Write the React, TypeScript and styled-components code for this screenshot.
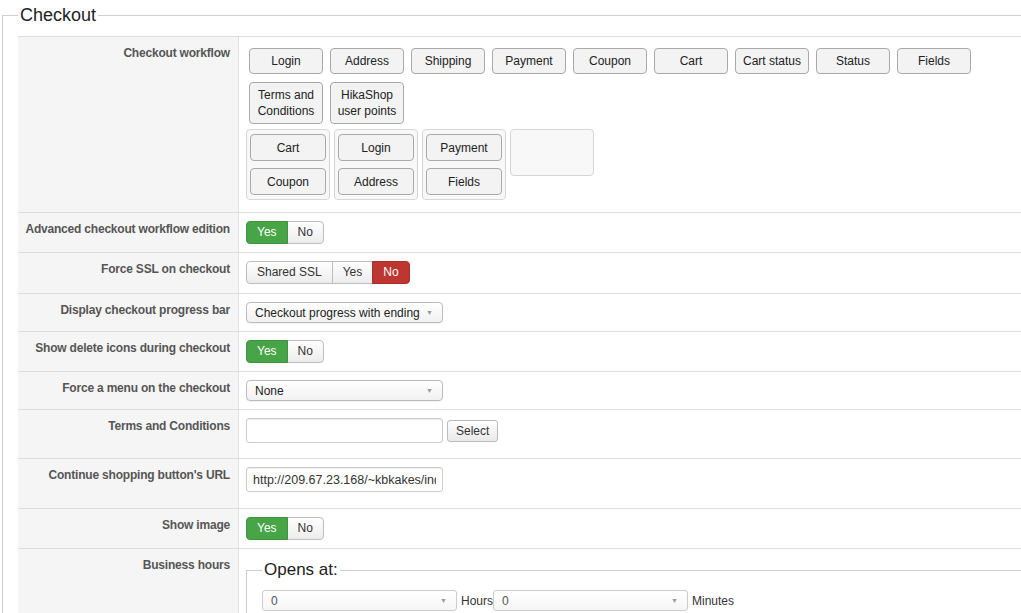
import React from "react";
import styled, { createGlobalStyle, css } from "styled-components";

const GlobalStyle = createGlobalStyle`
  html, body {
    margin: 0;
    padding: 0;
    background: #ffffff;
    overflow: hidden;
  }
  body {
    font-family: "Liberation Sans", Arial, Helvetica, sans-serif;
    color: #333;
  }
  * { box-sizing: border-box; }
`;

const Page = styled.div`
  width: 1021px;
  height: 613px;
  overflow: hidden;
`;

const Fieldset = styled.fieldset`
  margin: 3px -60px 0 2px;
  border: 1px solid #cfcfcf;
  border-right: none;
  padding: 0 0 0 15px;
  min-inline-size: 0;
`;

const Legend = styled.legend`
  font-size: 18px;
  line-height: 24px;
  padding: 0 2px;
  color: #222;
`;

const Table = styled.div`
  margin-top: 9px;
  border-top: 1px solid #dddddd;
`;

const Row = styled.div`
  display: grid;
  grid-template-columns: 221px 1fr;
  border-bottom: 1px solid #dddddd;
`;

const Label = styled.div`
  background: #f5f5f5;
  border-right: 1px solid #e0e0e0;
  padding: 8px 8px 8px 0;
  text-align: right;
  white-space: nowrap;
  font-size: 12px;
  letter-spacing: -0.2px;
  line-height: 16px;
  font-weight: bold;
  color: #555;
`;

const Value = styled.div<{ $inline?: boolean; $tall?: boolean }>`
  padding: ${(p) => (p.$tall ? "8px 7px 9px" : "8px 7px")};
  ${(p) =>
    p.$inline &&
    css`
      display: flex;
      align-items: flex-start;
    `}
`;

const SlotList = styled.div`
  display: flex;
  flex-wrap: wrap;
  gap: 8px 7px;
  margin: 3px 0 0 3px;
  max-width: 760px;
  align-items: flex-start;
`;

const SlotButton = styled.div<{ $inner?: boolean }>`
  width: ${(p) => (p.$inner ? "76px" : "74px")};
  padding: ${(p) => (p.$inner ? "5px 2px 4px" : "4px 2px")};
  line-height: 16px;
  font-size: 12px;
  text-align: center;
  color: #222;
  background: #f3f3f3;
  border: 1px solid #a9a9a9;
  border-radius: 4px;
`;

const GroupRow = styled.div`
  display: flex;
  align-items: flex-start;
  gap: 4px;
  margin: 5px 0 4px;
`;

const Group = styled.div`
  width: 84px;
  min-height: 47px;
  padding: 4px 3px;
  display: flex;
  flex-direction: column;
  gap: 7px;
  border: 1px solid #d6d6d6;
  border-radius: 4px;
  background: #f8f8f8;
`;

type Tone = "success" | "danger" | undefined;

const ToggleGroup = styled.div`
  display: inline-flex;
`;

const ToggleBtn = styled.div<{ $tone?: Tone }>`
  padding: 3px 10px;
  font-size: 12px;
  line-height: 15px;
  color: #333;
  background: linear-gradient(#ffffff, #ececec);
  border: 1px solid #bdbdbd;
  margin-left: -1px;
  &:first-child {
    margin-left: 0;
    border-radius: 4px 0 0 4px;
  }
  &:last-child {
    border-radius: 0 4px 4px 0;
  }
  ${(p) =>
    p.$tone === "success" &&
    css`
      color: #fff;
      background: #47a447;
      border-color: #3f923f;
      position: relative;
    `}
  ${(p) =>
    p.$tone === "danger" &&
    css`
      color: #fff;
      background: #bd362f;
      border-color: #a8302a;
      position: relative;
    `}
`;

const FakeSelect = styled.div<{ $flat?: boolean }>`
  width: ${(p) => (p.$flat ? "195px" : "197px")};
  height: 21px;
  padding: 0 9px 0 8px;
  display: flex;
  align-items: center;
  justify-content: space-between;
  font-size: 12px;
  color: ${(p) => (p.$flat ? "#555" : "#222")};
  border: 1px solid ${(p) => (p.$flat ? "#cccccc" : "#bbbbbb")};
  border-radius: ${(p) => (p.$flat ? "3px" : "4px")};
  background: ${(p) =>
    p.$flat ? "linear-gradient(#ffffff, #f6f6f6)" : "linear-gradient(#ffffff, #f1f1f1)"};
  box-shadow: ${(p) => (p.$flat ? "none" : "0 1px 1px rgba(0,0,0,0.06)")};
`;

const Arrow = styled.span`
  font-size: 7px;
  color: #999;
  line-height: 1;
`;

const TextInput = styled.input`
  width: 197px;
  height: 25px;
  margin: 0 0 7px;
  padding: 0 6px;
  font-family: "Liberation Sans", Arial, sans-serif;
  font-size: 12.5px;
  color: #333;
  border: 1px solid #cccccc;
  border-radius: 3px;
  box-shadow: inset 0 1px 1px rgba(0, 0, 0, 0.075);
  outline: none;
`;

const SmallButton = styled.button`
  height: 22px;
  margin: 2px 0 0 4px;
  padding: 0 8px;
  font-family: "Liberation Sans", Arial, sans-serif;
  font-size: 12px;
  color: #333;
  background: linear-gradient(#ffffff, #e9e9e9);
  border: 1px solid #bbbbbb;
  border-radius: 3px;
`;

const SubFieldset = styled.fieldset`
  margin: 2px -60px 0 0;
  border: 1px solid #cccccc;
  border-right: none;
  padding: 9px 0 40px 15px;
  min-inline-size: 0;
`;

const SubLegend = styled.legend`
  font-size: 17px;
  line-height: 22px;
  padding: 0 2px;
  color: #222;
`;

const HoursLine = styled.div`
  display: flex;
  align-items: center;
  font-size: 12px;
  color: #333;
  margin-bottom: 10px;
`;

const Unit = styled.span`
  margin-left: 4px;
`;

const workflowSlots = [
  "Login",
  "Address",
  "Shipping",
  "Payment",
  "Coupon",
  "Cart",
  "Cart status",
  "Status",
  "Fields",
  "Terms and Conditions",
  "HikaShop user points",
];

const groups: string[][] = [["Cart", "Coupon"], ["Login", "Address"], ["Payment", "Fields"], []];

const Toggle = ({ options, active, tone }: { options: string[]; active: string; tone: Tone }) => (
  <ToggleGroup>
    {options.map((o) => (
      <ToggleBtn key={o} $tone={o === active ? tone : undefined}>
        {o}
      </ToggleBtn>
    ))}
  </ToggleGroup>
);

const Select = ({ value, flat }: { value: string; flat?: boolean }) => (
  <FakeSelect $flat={flat} role="listbox">
    <span>{value}</span>
    <Arrow>▼</Arrow>
  </FakeSelect>
);

const TimePicker = ({ title }: { title: string }) => (
  <SubFieldset>
    <SubLegend>{title}</SubLegend>
    <HoursLine>
      <Select value="0" flat />
      <Unit>Hours</Unit>
      <Select value="0" flat />
      <Unit>Minutes</Unit>
    </HoursLine>
  </SubFieldset>
);

export default function App() {
  return (
    <Page>
      <GlobalStyle />
      <Fieldset>
        <Legend>Checkout</Legend>
        <Table>
          <Row>
            <Label>Checkout workflow</Label>
            <Value>
              <SlotList>
                {workflowSlots.map((s) => (
                  <SlotButton key={s}>{s}</SlotButton>
                ))}
              </SlotList>
              <GroupRow>
                {groups.map((g, i) => (
                  <Group key={i}>
                    {g.map((s) => (
                      <SlotButton key={s} $inner>
                        {s}
                      </SlotButton>
                    ))}
                  </Group>
                ))}
              </GroupRow>
            </Value>
          </Row>
          <Row>
            <Label>Advanced checkout workflow edition</Label>
            <Value>
              <Toggle options={["Yes", "No"]} active="Yes" tone="success" />
            </Value>
          </Row>
          <Row>
            <Label>Force SSL on checkout</Label>
            <Value $tall>
              <Toggle options={["Shared SSL", "Yes", "No"]} active="No" tone="danger" />
            </Value>
          </Row>
          <Row>
            <Label>Display checkout progress bar</Label>
            <Value>
              <Select value="Checkout progress with ending" />
            </Value>
          </Row>
          <Row>
            <Label>Show delete icons during checkout</Label>
            <Value>
              <Toggle options={["Yes", "No"]} active="Yes" tone="success" />
            </Value>
          </Row>
          <Row>
            <Label>Force a menu on the checkout</Label>
            <Value>
              <Select value="None" />
            </Value>
          </Row>
          <Row>
            <Label>Terms and Conditions</Label>
            <Value $inline>
              <TextInput type="text" defaultValue="" />
              <SmallButton type="button">Select</SmallButton>
            </Value>
          </Row>
          <Row>
            <Label>Continue shopping button's URL</Label>
            <Value $tall>
              <TextInput
                type="text"
                defaultValue="http://209.67.23.168/~kbkakes/index.php?option=com_content"
              />
            </Value>
          </Row>
          <Row>
            <Label>Show image</Label>
            <Value>
              <Toggle options={["Yes", "No"]} active="Yes" tone="success" />
            </Value>
          </Row>
          <Row>
            <Label>Business hours</Label>
            <Value>
              <TimePicker title="Opens at:" />
            </Value>
          </Row>
        </Table>
      </Fieldset>
    </Page>
  );
}
